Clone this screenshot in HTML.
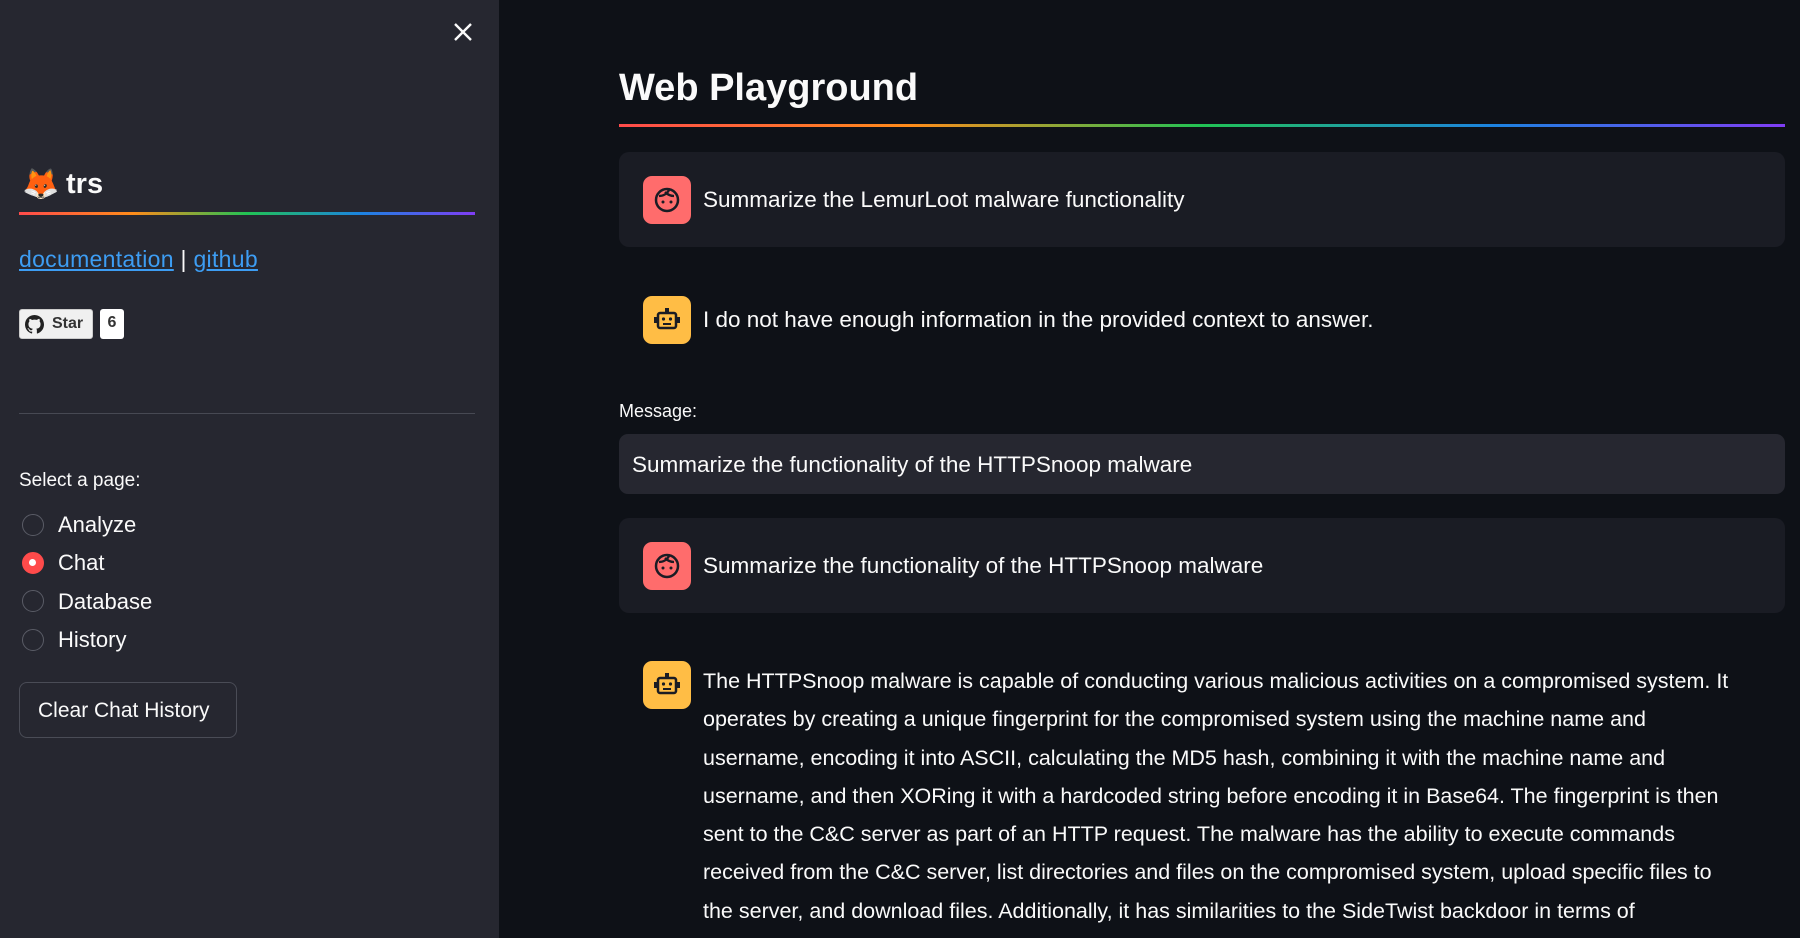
<!DOCTYPE html>
<html><head><meta charset="utf-8"><style>
*{box-sizing:border-box;margin:0;padding:0}
body{width:1800px;height:938px;overflow:hidden;background:#0e1117;font-family:"Liberation Sans",sans-serif;color:#fafafa;position:relative}
.sb{position:absolute;left:0;top:0;width:499px;height:938px;background:#262730}
.abs{position:absolute}
.rb{height:3px;background:linear-gradient(90deg,#ff4b4b,#ff8c1a,#21c354,#1c83e1,#803df5)}
.radio{position:absolute;left:22px;width:22px;height:22px;border-radius:50%;border:1.5px solid #5a5c66}
.rl{position:absolute;left:58px;font-size:22px;color:#fafafa}
.card{position:absolute;left:619px;width:1166px;background:#1a1c24;border-radius:10px}
.ic{position:absolute;width:48px;height:48px;border-radius:9px}
.mt{position:absolute;left:703px;font-size:22.5px;color:#fafafa;white-space:nowrap}
</style></head><body>
<div class="sb">
 <svg class="abs" style="left:453px;top:22px" width="20" height="20" viewBox="0 0 20 20"><path d="M2 2L18 18M18 2L2 18" stroke="#fafafa" stroke-width="2.4"/></svg>
 <div class="abs" style="left:22px;top:167px;font-size:30px">🦊</div>
 <div class="abs" style="left:66px;top:168px;font-size:29px;font-weight:bold">trs</div>
 <div class="abs rb" style="left:19px;top:212px;width:456px"></div>
 <div class="abs" style="left:19px;top:246px;font-size:23px;letter-spacing:0.3px"><span style="color:#3d9df3;text-decoration:underline">documentation</span> <span style="color:#fafafa">|</span> <span style="color:#3d9df3;text-decoration:underline">github</span></div>
 <div class="abs" style="left:19px;top:309px;width:74px;height:30px;background:#f0f0f0;border-radius:3px;border:1px solid #ccc;color:#333;font-size:16px;font-weight:bold;padding:5px 0 0 32px">Star</div>
 <svg class="abs" style="left:25px;top:315px" width="19" height="19" viewBox="0 0 16 16"><path fill="#222" d="M8 0C3.58 0 0 3.58 0 8c0 3.54 2.290 6.53 5.47 7.59.4.07.55-.17.55-.38v-1.33c-2.23.48-2.690-1.070-2.690-1.070-.36-.92-.89-1.170-.89-1.170-.73-.5.05-.49.05-.49.8.06 1.230.83 1.230.83.71 1.230 1.870.87 2.330.67.07-.52.28-.87.5-1.070-1.780-.2-3.640-.89-3.640-3.950 0-.87.31-1.590.82-2.150-.08-.2-.36-1.020.08-2.120 0 0 .67-.21 2.2.82A7.6 7.6 0 018 3.87c.68 0 1.360.09 2 .27 1.530-1.040 2.2-.82 2.2-.82.44 1.1.16 1.920.08 2.120.51.56.82 1.270.82 2.150 0 3.070-1.870 3.750-3.650 3.950.29.25.54.73.54 1.480v2.2c0 .21.15.46.55.38A8.01 8.01 0 0016 8c0-4.420-3.580-8-8-8z"/></svg>
 <div class="abs" style="left:100px;top:309px;width:24px;height:30px;background:#fff;border-radius:3px;color:#333;font-size:16px;font-weight:bold;text-align:center;padding-top:5px">6</div>
 <div class="abs" style="left:19px;top:413px;width:456px;height:1px;background:#474953"></div>
 <div class="abs" style="left:19px;top:470px;font-size:19px">Select a page:</div>
 <div class="radio" style="top:514px"></div><div class="rl" style="top:512px">Analyze</div>
 <div class="radio" style="top:552px;background:#ff4b4b;border-color:#ff4b4b"><div style="width:7px;height:7px;background:#fff;border-radius:50%;margin:6px"></div></div><div class="rl" style="top:550px">Chat</div>
 <div class="radio" style="top:590px"></div><div class="rl" style="top:589px">Database</div>
 <div class="radio" style="top:629px"></div><div class="rl" style="top:627px">History</div>
 <div class="abs" style="left:19px;top:682px;width:218px;height:56px;border:1px solid #4a4c56;border-radius:8px;font-size:21px;padding:16px 0 0 18px">Clear Chat History</div>
</div>
<div class="abs" style="left:619px;top:67px;font-size:38px;font-weight:bold">Web Playground</div>
<div class="abs rb" style="left:619px;top:124px;width:1166px"></div>
<div class="card" style="top:152px;height:95px"></div>
<div class="ic" style="left:643px;top:176px;background:#ff6c6c"><svg width="48" height="48" viewBox="0 0 48 48"><circle cx="24" cy="24" r="11" fill="none" stroke="#1a1c24" stroke-width="2.5"/><path d="M16 20c4 0 8-2 10-6M22 16c2 2 5 4 9 4" fill="none" stroke="#1a1c24" stroke-width="2.3"/><circle cx="20" cy="26" r="1.5" fill="#1a1c24"/><circle cx="28" cy="26" r="1.5" fill="#1a1c24"/></svg></div>
<div class="mt" style="top:187px">Summarize the LemurLoot malware functionality</div>
<div class="ic" style="left:643px;top:296px;background:#ffbd45"><svg width="48" height="48" viewBox="0 0 48 48"><rect x="15" y="17" width="18" height="15" rx="2" fill="none" stroke="#1a1c24" stroke-width="2.5"/><rect x="22" y="12" width="4" height="5" fill="#1a1c24"/><rect x="11" y="21" width="3" height="6" fill="#1a1c24"/><rect x="34" y="21" width="3" height="6" fill="#1a1c24"/><circle cx="20.5" cy="23" r="1.6" fill="#1a1c24"/><circle cx="27.5" cy="23" r="1.6" fill="#1a1c24"/><path d="M20 28h8" stroke="#1a1c24" stroke-width="2"/></svg></div>
<div class="mt" style="top:307px">I do not have enough information in the provided context to answer.</div>
<div class="abs" style="left:619px;top:401px;font-size:18px">Message:</div>
<div class="abs" style="left:619px;top:434px;width:1166px;height:60px;background:#262730;border-radius:9px;font-size:22.5px;padding:18px 0 0 13px">Summarize the functionality of the HTTPSnoop malware</div>
<div class="card" style="top:518px;height:95px"></div>
<div class="ic" style="left:643px;top:542px;background:#ff6c6c"><svg width="48" height="48" viewBox="0 0 48 48"><circle cx="24" cy="24" r="11" fill="none" stroke="#1a1c24" stroke-width="2.5"/><path d="M16 20c4 0 8-2 10-6M22 16c2 2 5 4 9 4" fill="none" stroke="#1a1c24" stroke-width="2.3"/><circle cx="20" cy="26" r="1.5" fill="#1a1c24"/><circle cx="28" cy="26" r="1.5" fill="#1a1c24"/></svg></div>
<div class="mt" style="top:553px">Summarize the functionality of the HTTPSnoop malware</div>
<div class="ic" style="left:643px;top:661px;background:#ffbd45"><svg width="48" height="48" viewBox="0 0 48 48"><rect x="15" y="17" width="18" height="15" rx="2" fill="none" stroke="#1a1c24" stroke-width="2.5"/><rect x="22" y="12" width="4" height="5" fill="#1a1c24"/><rect x="11" y="21" width="3" height="6" fill="#1a1c24"/><rect x="34" y="21" width="3" height="6" fill="#1a1c24"/><circle cx="20.5" cy="23" r="1.6" fill="#1a1c24"/><circle cx="27.5" cy="23" r="1.6" fill="#1a1c24"/><path d="M20 28h8" stroke="#1a1c24" stroke-width="2"/></svg></div>
<div class="mt" style="top:662px;line-height:38.3px;font-size:21.5px">The HTTPSnoop malware is capable of conducting various malicious activities on a compromised system. It<br>operates by creating a unique fingerprint for the compromised system using the machine name and<br>username, encoding it into ASCII, calculating the MD5 hash, combining it with the machine name and<br>username, and then XORing it with a hardcoded string before encoding it in Base64. The fingerprint is then<br>sent to the C&amp;C server as part of an HTTP request. The malware has the ability to execute commands<br>received from the C&amp;C server, list directories and files on the compromised system, upload specific files to<br>the server, and download files. Additionally, it has similarities to the SideTwist backdoor in terms of</div>
</body></html>
